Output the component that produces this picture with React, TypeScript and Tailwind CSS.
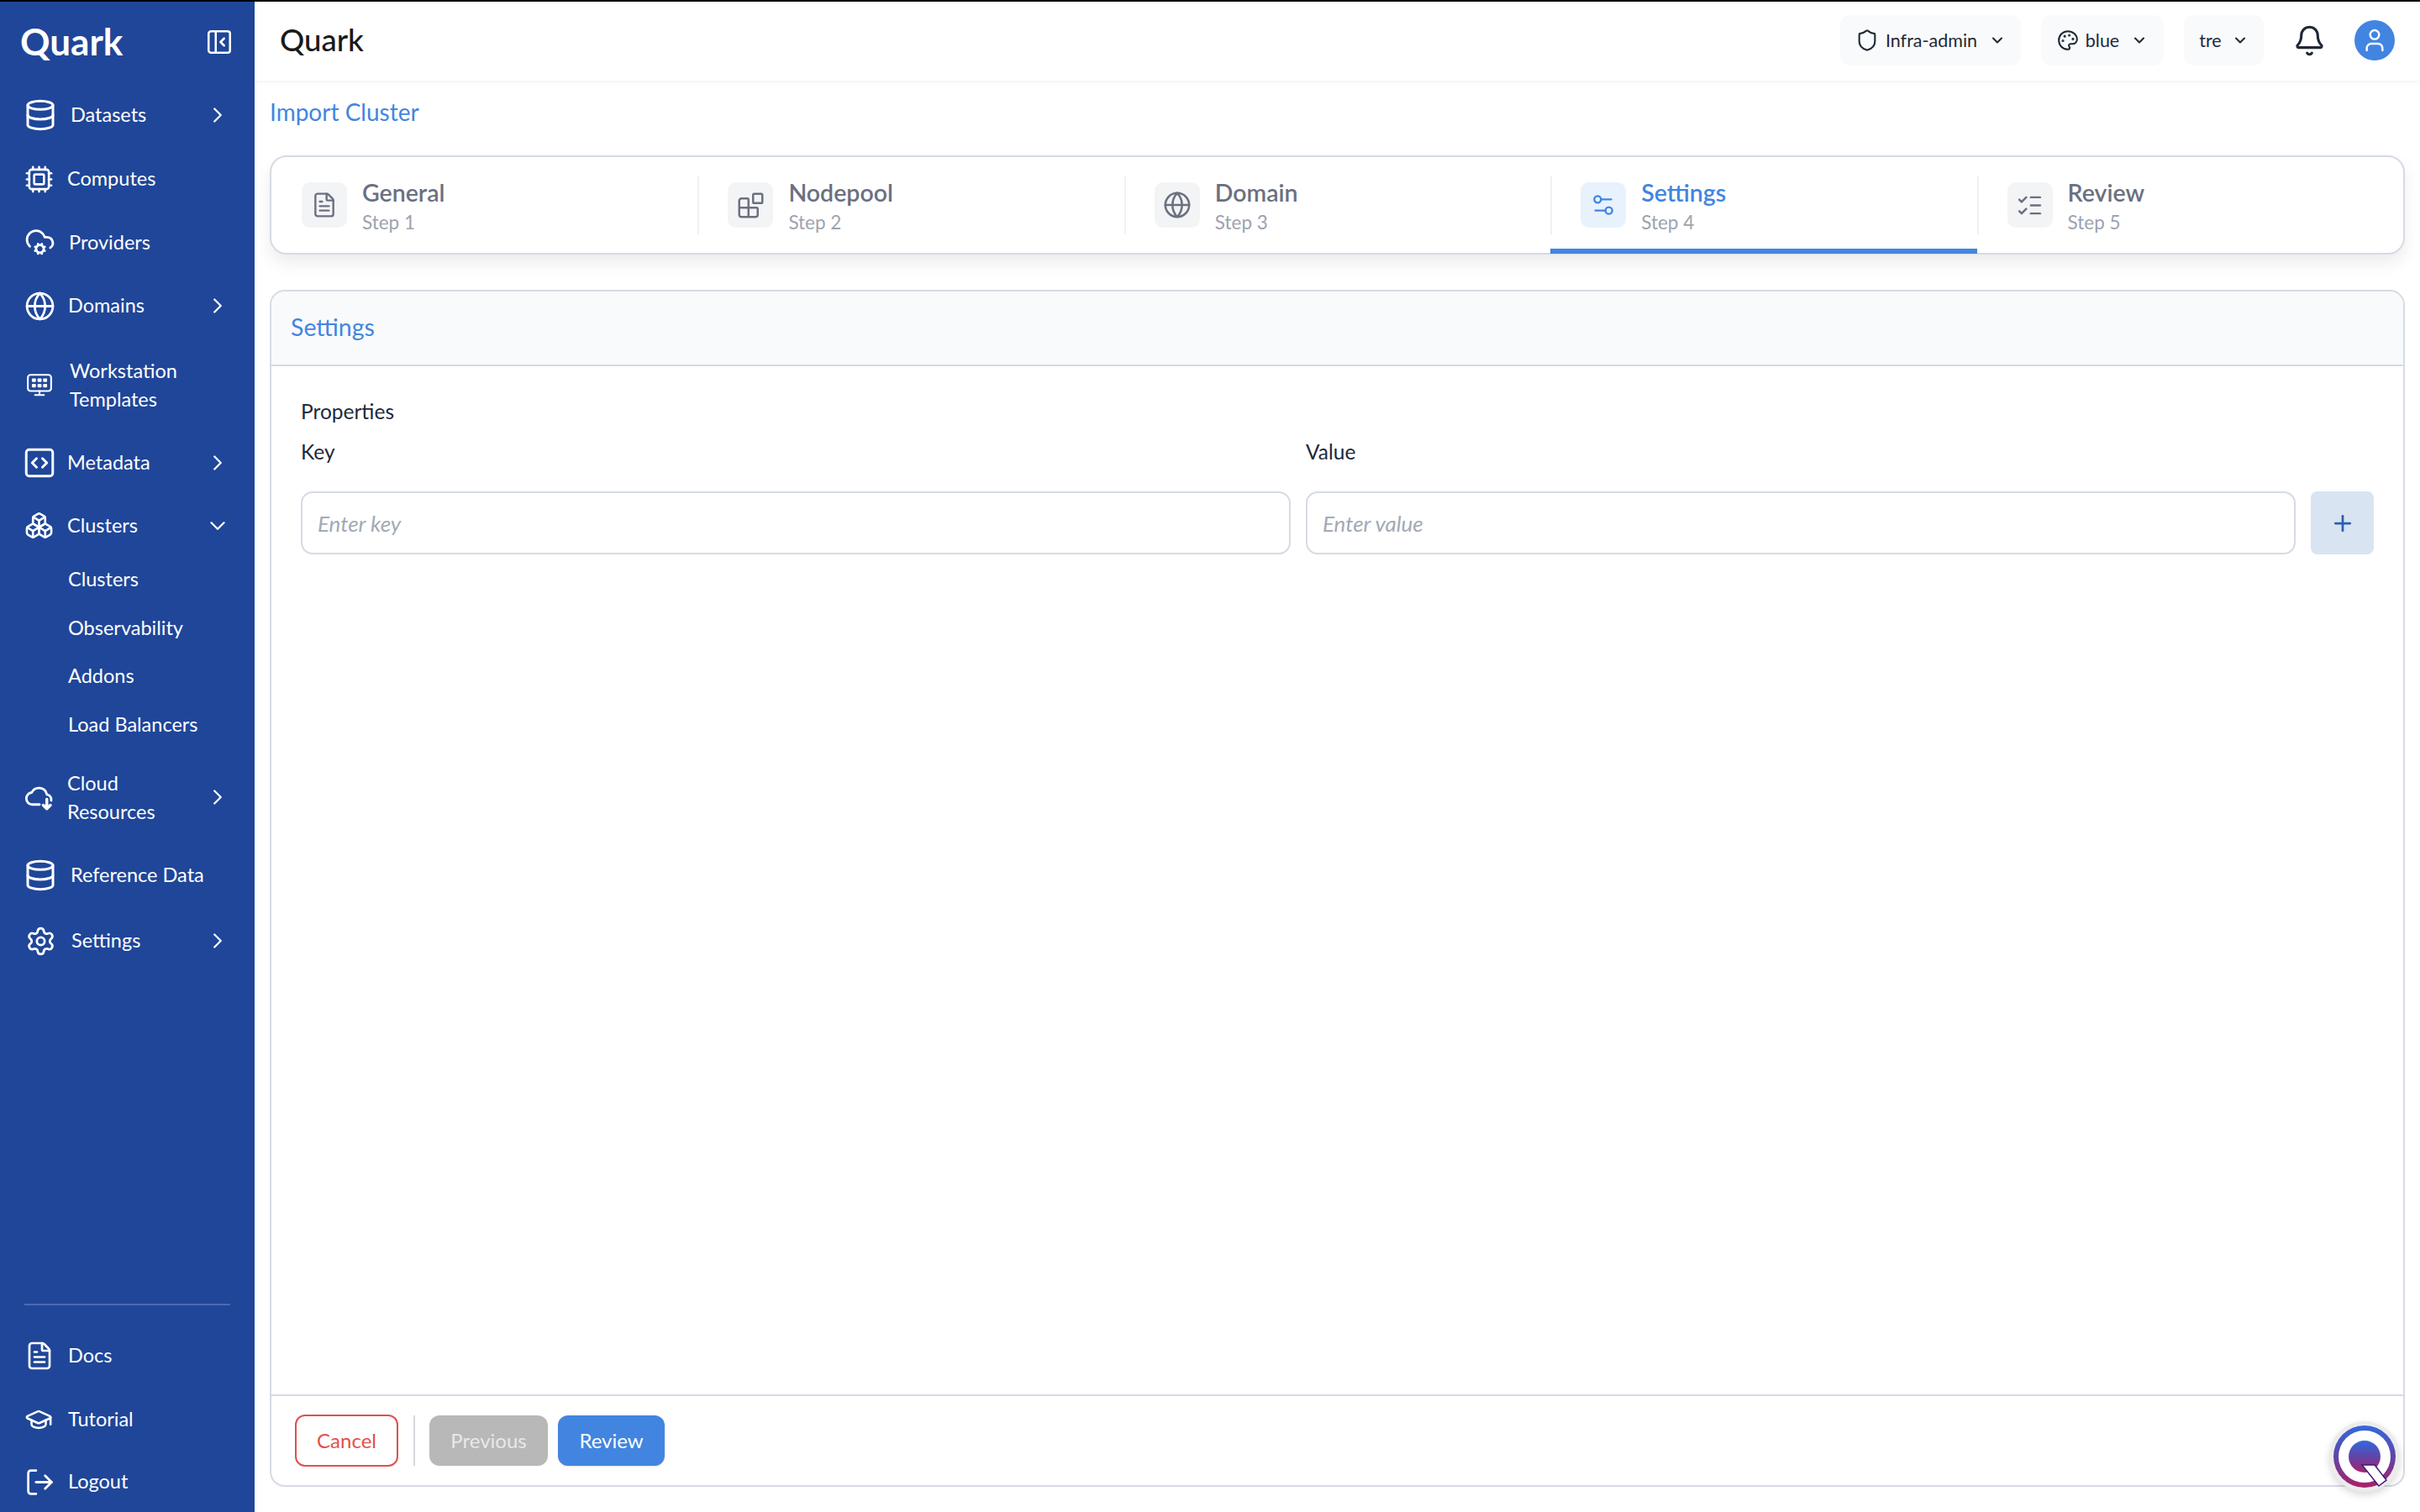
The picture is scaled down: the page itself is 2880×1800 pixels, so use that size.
import {
  Bell,
  Blocks,
  Boxes,
  ChevronDown,
  ChevronRight,
  CloudCog,
  Cpu,
  Database,
  FileText,
  Globe,
  GraduationCap,
  ListChecks,
  LogOut,
  Palette,
  PanelLeftClose,
  Plus,
  Settings,
  Settings2,
  Shield,
  SquareCode,
  User,
} from 'lucide-react';

function WorkstationIcon({ className }: { className?: string }) {
  return (
    <svg viewBox="0 0 30 30" fill="none" stroke="currentColor" strokeWidth="2" strokeLinecap="round" className={className}>
      <rect x="2" y="4" width="26" height="18" rx="3" />
      <path d="M15 22v4M10 26.500h10" />
      <g fill="currentColor" stroke="none">
        <rect x="6.500" y="8" width="4.500" height="4" rx="1" />
        <rect x="12.800" y="8" width="4.500" height="4" rx="1" />
        <rect x="19" y="8" width="4.500" height="4" rx="1" />
        <rect x="6.500" y="14" width="4.500" height="4" rx="1" />
        <rect x="12.800" y="14" width="4.500" height="4" rx="1" />
        <rect x="19" y="14" width="4.500" height="4" rx="1" />
      </g>
    </svg>
  );
}

function CloudArrowIcon({ className }: { className?: string }) {
  return (
    <svg viewBox="0 0 24 24" fill="none" stroke="currentColor" strokeWidth="1.800" strokeLinecap="round" strokeLinejoin="round" className={className}>
      <path d="M12 17.500H6.500a4.500 4.500 0 0 1-.3-8.980 6 6 0 0 1 11.300 1.480 3.800 3.800 0 0 1 3.300 4.500" />
      <path d="M17.500 13.500v7M14.800 18l2.700 2.700 2.700-2.700" strokeWidth="2.200" />
    </svg>
  );
}

function QuarkBadge() {
  return (
    <svg viewBox="0 0 84 84" className="absolute right-[24px] bottom-[24px] h-[84px] w-[84px] drop-shadow-lg">
      <defs>
        <linearGradient id="quark-q" x1="0" y1="0" x2="0" y2="1">
          <stop offset="0" stopColor="#3568dc" />
          <stop offset="0.5" stopColor="#5f45a8" />
          <stop offset="1" stopColor="#ab2168" />
        </linearGradient>
      </defs>
      <circle cx="42" cy="42" r="42" fill="#ececec" />
      <circle cx="42" cy="42" r="37" fill="url(#quark-q)" />
      <circle cx="42" cy="42" r="31" fill="#fff" />
      <circle cx="42" cy="42" r="19" fill="url(#quark-q)" />
      <path d="M39 52h15l14 18-9 7z" fill="#fff" stroke="#3b1a78" strokeWidth="1.500" />
    </svg>
  );
}

const subItems = ['Clusters', 'Observability', 'Addons', 'Load Balancers'];

const bottomNav = [
  { label: 'Docs', Icon: FileText, h: 'h-[76px]', size: 'h-[36px] w-[36px]', gap: 'gap-[16px]' },
  { label: 'Tutorial', Icon: GraduationCap, h: 'h-[76px]', size: 'h-[34px] w-[34px]', gap: 'gap-[18px]' },
  { label: 'Logout', Icon: LogOut, h: 'h-[72px]', size: 'h-[37px] w-[37px]', gap: 'gap-[15px]' },
];

const steps = [
  { title: 'General', sub: 'Step 1', Icon: FileText, size: 'h-[32px] w-[32px]' },
  { title: 'Nodepool', sub: 'Step 2', Icon: Blocks, size: 'h-[33px] w-[33px]' },
  { title: 'Domain', sub: 'Step 3', Icon: Globe, size: 'h-[34px] w-[34px]' },
  { title: 'Settings', sub: 'Step 4', Icon: Settings2, size: 'h-[32px] w-[32px]', active: true },
  { title: 'Review', sub: 'Step 5', Icon: ListChecks, size: 'h-[33px] w-[33px]' },
];

function NavChevron() {
  return <ChevronRight className="absolute right-[29px] h-[30px] w-[30px]" strokeWidth={1.800} />;
}

function Sidebar() {
  return (
    <aside className="flex w-[303px] shrink-0 flex-col bg-[#1f4699] text-[23.500px] text-white">
      <div className="flex h-[96px] shrink-0 items-center justify-between pr-[25px] pl-[24px]">
        <span className="pb-[3px] text-[44px] leading-none font-bold">Quark</span>
        <PanelLeftClose className="h-[34px] w-[34px]" strokeWidth={1.800} />
      </div>
      <nav className="flex flex-col">
        <div className="relative flex h-[77px] items-center gap-[16px] pl-[28px]">
          <Database className="h-[40px] w-[40px]" strokeWidth={1.800} />
          <span>Datasets</span>
          <NavChevron />
        </div>
        <div className="flex h-[76px] items-center gap-[16px] pl-[29px]">
          <Cpu className="h-[35px] w-[35px]" strokeWidth={1.800} />
          <span>Computes</span>
        </div>
        <div className="flex h-[75px] items-center gap-[16px] pl-[29px]">
          <CloudCog className="h-[37px] w-[37px]" strokeWidth={1.800} />
          <span>Providers</span>
        </div>
        <div className="relative flex h-[76px] items-center gap-[15px] pl-[29px]">
          <Globe className="h-[37px] w-[37px]" strokeWidth={1.800} />
          <span>Domains</span>
          <NavChevron />
        </div>
        <div className="flex h-[111px] items-center gap-[20px] pl-[31px] leading-[34px]">
          <WorkstationIcon className="h-[32px] w-[32px]" />
          <span>
            Workstation
            <br />
            Templates
          </span>
        </div>
        <div className="relative flex h-[75px] items-center gap-[12px] pl-[26px]">
          <SquareCode className="h-[42px] w-[42px]" strokeWidth={1.700} />
          <span>Metadata</span>
          <NavChevron />
        </div>
        <div className="relative flex h-[75px] items-center gap-[16px] pl-[29px]">
          <Boxes className="h-[35px] w-[35px]" strokeWidth={1.800} />
          <span>Clusters</span>
          <ChevronDown className="absolute right-[29px] h-[30px] w-[30px]" strokeWidth={1.800} />
        </div>
        <div className="-mt-[2px] flex flex-col pl-[81px]">
          {subItems.map((s) => (
            <div key={s} className="flex h-[57.500px] items-center">
              {s}
            </div>
          ))}
        </div>
        <div className="relative mt-[4px] flex h-[108px] items-center gap-[14px] pl-[28px] leading-[34px]">
          <CloudArrowIcon className="h-[38px] w-[38px]" />
          <span>
            Cloud
            <br />
            Resources
          </span>
          <NavChevron />
        </div>
        <div className="flex h-[77px] items-center gap-[16px] pl-[28px]">
          <Database className="h-[40px] w-[40px]" strokeWidth={1.800} />
          <span>Reference Data</span>
        </div>
        <div className="relative flex h-[80px] items-center gap-[18px] pl-[30px]">
          <Settings className="h-[37px] w-[37px]" strokeWidth={1.800} />
          <span>Settings</span>
          <NavChevron />
        </div>
      </nav>
      <div className="mt-auto flex flex-col">
        <div className="mx-[29px] mb-[22px] h-[2px] bg-white/20" />
        {bottomNav.map(({ label, Icon, h, size, gap }) => (
          <div key={label} className={`flex items-center pl-[29px] ${h} ${gap}`}>
            <Icon className={size} strokeWidth={1.800} />
            <span>{label}</span>
          </div>
        ))}
      </div>
    </aside>
  );
}

function Pill({ children, className }: { children: React.ReactNode; className: string }) {
  return (
    <div className={`flex h-[60px] items-center justify-center rounded-[12px] bg-[#f9fafb] text-[21.500px] text-[#1f2937] ${className}`}>
      {children}
    </div>
  );
}

function Header() {
  return (
    <header className="flex h-[94px] shrink-0 items-center justify-between bg-white pr-[30px] pb-[2px] pl-[30px] shadow-[0_2px_4px_rgba(0,0,0,0.05)]">
      <span className="pb-[2px] text-[36.500px] font-medium text-[#1a1a1a]">Quark</span>
      <div className="flex items-center">
        <Pill className="w-[215px] gap-[8px]">
          <Shield className="h-[28px] w-[28px]" strokeWidth={1.800} />
          <span>Infra-admin</span>
          <ChevronDown className="ml-[6px] h-[20px] w-[20px]" strokeWidth={2.500} />
        </Pill>
        <Pill className="ml-[24px] w-[146px] gap-[8px]">
          <Palette className="h-[26px] w-[26px]" strokeWidth={1.900} />
          <span>blue</span>
          <ChevronDown className="ml-[6px] h-[20px] w-[20px]" strokeWidth={2.500} />
        </Pill>
        <Pill className="ml-[24px] w-[95px] gap-[12px]">
          <span>tre</span>
          <ChevronDown className="h-[20px] w-[20px]" strokeWidth={2.500} />
        </Pill>
        <Bell className="ml-[35px] h-[39px] w-[39px] text-[#1f2937]" strokeWidth={1.900} />
        <div className="ml-[34px] flex h-[48px] w-[48px] items-center justify-center rounded-full bg-[#4285e0] text-white">
          <User className="h-[32px] w-[32px]" strokeWidth={1.800} />
        </div>
      </div>
    </header>
  );
}

function Stepper() {
  return (
    <div className="mt-[34px] grid h-[118px] shrink-0 grid-cols-5 rounded-[20px] border-2 border-[#d5dbe5] bg-white shadow-[0_10px_20px_rgba(0,0,0,0.08)]">
      {steps.map(({ title, sub, Icon, size, active }, i) => (
        <div key={title} className="relative flex items-center">
          <div className={`flex h-[70px] w-full items-center gap-[18px] ${i > 0 ? 'border-l-2 border-[#f0f1f3] pl-[34px]' : 'pl-[36px]'}`}>
            <div
              className={`flex h-[54px] w-[54px] items-center justify-center rounded-[10px] ${
                active ? 'bg-[#e8f2fc] text-[#4285e0]' : 'bg-[#f3f4f6] text-[#6b7080]'
              }`}
            >
              <Icon className={size} strokeWidth={1.800} />
            </div>
            <div className="flex flex-col pt-[6px]">
              <span className={`text-[28.500px] leading-[36px] font-semibold ${active ? 'text-[#4285e0]' : 'text-[#6b7080]'}`}>{title}</span>
              <span className="text-[22.500px] leading-[36px] text-[#9ca3af]">{sub}</span>
            </div>
          </div>
          {active && <div className="absolute right-0 -bottom-[1px] left-0 h-[6px] bg-[#4285e0]" />}
        </div>
      ))}
    </div>
  );
}

function SettingsCard() {
  return (
    <section className="mt-[42px] flex min-h-0 flex-1 flex-col rounded-[18px] border-2 border-[#d5dbe5] bg-white">
      <div className="flex h-[89px] shrink-0 items-center rounded-t-[16px] border-b-2 border-[#d5dbe5] bg-[#f9fafb] pb-[3px] pl-[23px]">
        <h2 className="text-[28.500px] text-[#4285e0]">Settings</h2>
      </div>
      <div className="flex-1 px-[35px] pt-[36px] text-[24.500px] text-[#1f2937]">
        <div className="leading-[36px]">Properties</div>
        <div className="mt-[12px] flex gap-[18px] leading-[36px]">
          <label className="w-[1178px]">Key</label>
          <label>Value</label>
        </div>
        <div className="mt-[29px] flex gap-[18px]">
          <input
            placeholder="Enter key"
            className="h-[75px] w-[1178px] rounded-[14px] border-2 border-[#d5dbe5] bg-white pl-[18px] text-[26px] italic placeholder:text-[#a3a9b5]"
          />
          <input
            placeholder="Enter value"
            className="h-[75px] w-[1178px] rounded-[14px] border-2 border-[#d5dbe5] bg-white pl-[18px] text-[26px] italic placeholder:text-[#a3a9b5]"
          />
          <button className="flex h-[75px] w-[75px] items-center justify-center rounded-[8px] bg-[#d8e4f2] text-[#2e5fb0]">
            <Plus className="h-[30px] w-[30px]" strokeWidth={2.200} />
          </button>
        </div>
      </div>
      <div className="flex h-[108px] shrink-0 items-center border-t-2 border-[#d5dbe5] pl-[28px] text-[24px]">
        <button className="h-[62px] w-[123px] rounded-[12px] border-2 border-[#e2504c] bg-white text-[#e2504c]">Cancel</button>
        <div className="mr-[17px] ml-[18px] h-[60px] w-[2px] bg-[#d5d8dd]" />
        <button className="h-[60px] w-[141px] rounded-[12px] bg-[#b8b8b8] text-[#e8e8e8]">Previous</button>
        <button className="ml-[12px] h-[60px] w-[127px] rounded-[12px] bg-[#4285e0] text-white shadow-sm">Review</button>
      </div>
    </section>
  );
}

export default function App() {
  return (
    <div className="relative flex h-[1800px] w-[2880px] flex-col overflow-hidden bg-white font-[Lato,sans-serif]">
      <div className="h-[2px] shrink-0 bg-black" />
      <div className="flex min-h-0 flex-1">
        <Sidebar />
        <main className="flex min-w-0 flex-1 flex-col">
          <Header />
          <div className="flex min-h-0 flex-1 flex-col px-[18px] pb-[30px]">
            <h1 className="mt-[19px] text-[28px] leading-[36px] text-[#4285e0]">Import Cluster</h1>
            <Stepper />
            <SettingsCard />
          </div>
        </main>
      </div>
      <QuarkBadge />
    </div>
  );
}
